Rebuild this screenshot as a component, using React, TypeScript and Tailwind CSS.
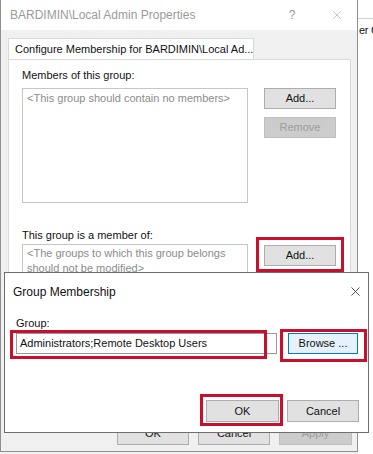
import { X } from "lucide-react";

type BtnProps = { label: string; w?: string; disabled?: boolean; focus?: boolean; h?: string };

function WinButton({ label, w = "w-[72px]", disabled, focus, h = "h-[21px]" }: BtnProps) {
  const tone = disabled
    ? "bg-[#cccccc] border-[#bfbfbf] text-[#9d9d9d]"
    : focus
      ? "bg-[#e5f1fb] border-[#0078d7] text-[#111]"
      : "bg-[#e1e1e1] border-[#adadad] text-[#111]";
  return (
    <div className={`${w} ${h} ${tone} border flex items-center justify-center text-[11px] leading-none`}>
      {label}
    </div>
  );
}

export default function App() {
  return (
    <div className="relative w-[373px] h-[454px] overflow-hidden bg-[#f0f0f0] font-['Liberation_Sans',Arial,sans-serif] flex">
      {/* properties window */}
      <div className="w-[358px] h-[452px] shrink-0 flex flex-col border-l border-r border-b border-[#8f8f8f]">
        <div className="h-[30px] bg-white flex items-center pl-[9px] text-[12px] text-[#9a9a9a] shrink-0">
          <span className="flex-1">BARDIMIN\Local Admin Properties</span>
          <span className="w-[30px] text-center">?</span>
          <span className="w-[15px]" />
          <span className="w-[30px] flex justify-center">
            <X size={14} strokeWidth={1} className="text-[#9a9a9a]" />
          </span>
          <span className="w-[5px]" />
        </div>

        <div className="flex-1 bg-[#f0f0f0] pl-[7px] pt-[8px] flex flex-col">
          <div className="w-[246px] h-[21px] bg-white border border-b-0 border-[#d9d9d9] flex items-center pl-[6px] text-[11px] text-[#111] whitespace-nowrap">
            Configure Membership for BARDIMIN\Local Ad...
          </div>
          <div className="w-[343px] h-[355px] bg-white border border-[#d9d9d9] pl-[13px] pt-[8px]">
            <div className="text-[11px] leading-[14px] text-[#111]">Members of this group:</div>
            <div className="flex mt-[6px]">
              <div className="w-[226px] h-[115px] border border-[#c6c6c6] px-[4px] pt-[2px] text-[11px] leading-[14px] text-[#8c8c8c]">
                &lt;This group should contain no members&gt;
              </div>
              <div className="ml-[16px] flex flex-col gap-[8px]">
                <WinButton label="Add..." />
                <WinButton label="Remove" disabled />
              </div>
            </div>
            <div className="mt-[25px] text-[11px] leading-[14px] text-[#111]">This group is a member of:</div>
            <div className="flex mt-[2px]">
              <div className="w-[226px] h-[70px] border border-[#c6c6c6] px-[4px] pt-[1px] text-[11px] leading-[15px] text-[#8c8c8c]">
                &lt;The groups to which this group belongs should not be modified&gt;
              </div>
              <div className="ml-[16px] mt-[1px]">
                <WinButton label="Add..." />
              </div>
            </div>
          </div>
          <div className="mt-[8px] ml-[109px] flex gap-[9px]">
            <WinButton label="OK" h="h-[23px]" />
            <WinButton label="Cancel" h="h-[23px]" />
            <WinButton label="Apply" h="h-[23px]" w="w-[73px]" disabled />
          </div>
        </div>
      </div>

      {/* window behind, on the right */}
      <div className="flex-1 min-w-0 overflow-hidden bg-white flex flex-col">
        <div className="h-[19px] border-b border-[#d0d0d0]" />
        <div className="pl-[1px] pt-[3px] text-[11px] tracking-[-0.3px] text-[#111] whitespace-nowrap">er C</div>
      </div>

      {/* Group Membership dialog */}
      <div className="absolute left-[4px] top-[272px] w-[365px] h-[161px] bg-white border border-[#6e6e6e] flex flex-col">
        <div className="h-[37px] flex items-center pl-[8px] pr-[5px] shrink-0">
          <span className="flex-1 text-[12px] text-[#111]">Group Membership</span>
          <X size={15} strokeWidth={1.2} className="text-[#222]" />
        </div>
        <div className="pl-[11px]">
          <div className="mt-[6px] text-[11px] leading-[14px] text-[#111]">Group:</div>
          <div className="flex mt-[3px]">
            <div className="w-[261px] h-[21px] border border-[#9a9a9a] bg-white flex items-center pl-[3px] text-[11px] text-[#111] whitespace-nowrap">
              Administrators;Remote Desktop Users
            </div>
            <div className="ml-[11px]">
              <WinButton label="Browse ..." w="w-[70px]" focus />
            </div>
          </div>
        </div>
        <div className="mt-[46px] flex justify-end gap-[8px] pr-[9px]">
          <WinButton label="OK" w="w-[73px]" h="h-[22px]" />
          <WinButton label="Cancel" h="h-[22px]" />
        </div>
      </div>

      {/* red highlight boxes */}
      <div className="absolute left-[256px] top-[237px] w-[88px] h-[35px] border-[3px] border-[#c8102e]" />
      <div className="absolute left-[10px] top-[330px] w-[257px] h-[29px] border-[3px] border-[#c8102e]" />
      <div className="absolute left-[280px] top-[329px] w-[87px] h-[33px] border-[3px] border-[#c8102e]" />
      <div className="absolute left-[200px] top-[394px] w-[83px] h-[32px] border-[3px] border-[#c8102e]" />
    </div>
  );
}
